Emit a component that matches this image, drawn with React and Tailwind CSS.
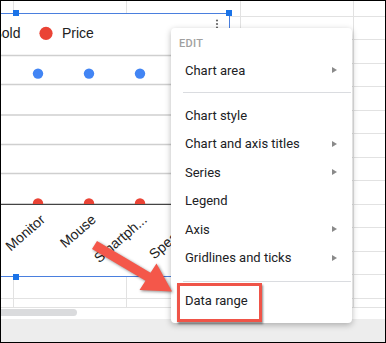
const MENU = [
  { label: "Chart area", sub: true },
  { sep: true, cls: "mt-[7.5px] mb-[8px]" },
  { label: "Chart style" },
  { label: "Chart and axis titles", sub: true },
  { label: "Series", sub: true },
  { label: "Legend" },
  { label: "Axis", sub: true },
  { label: "Gridlines and ticks", sub: true },
  { sep: true, cls: "mt-[8.5px] mb-[5px]" },
  { label: "Data range" },
];

const CATEGORIES = ["Monitor", "Mouse", "Smartph...", "Speakers"];

function SheetRow({ h }) {
  return (
    <div className={`flex shrink-0 border-b border-[#e2e2e2] ${h}`}>
      <div className="w-[13.5px] shrink-0 border-r border-[#e2e2e2]" />
      <div className="w-[113.5px] shrink-0 border-r border-[#e2e2e2]" />
      <div className="w-[113.5px] shrink-0 border-r border-[#e2e2e2]" />
      <div className="w-[113.5px] shrink-0 border-r border-[#e2e2e2]" />
      <div className="flex-1" />
    </div>
  );
}

function Sheet() {
  return (
    <div className="flex flex-col h-full bg-white">
      <SheetRow h="h-[16.5px]" />
      {Array.from({ length: 12 }).map((_, i) => (
        <SheetRow key={i} h="h-[23.5px]" />
      ))}
      <SheetRow h="h-[9px]" />
      {/* horizontal scrollbar */}
      <div className="h-[11px] shrink-0 pt-px">
        <div className="w-[77px] h-[7px] rounded-r-full bg-[#dadbdd]" />
      </div>
      <div className="flex-1 bg-[#ededed]" />
    </div>
  );
}

function Chart() {
  const xs = [38, 89, 140, 191];
  return (
    <div className="absolute left-[-40px] top-[13px] w-[270px] h-[264px] bg-white border-t border-r border-b border-[#4a7fde]">
      <svg
        className="absolute inset-0 font-['Liberation_Sans',Arial,sans-serif]"
        width="269"
        height="262"
        viewBox="-40 14 269 262"
      >
        <defs>
          <clipPath id="plot">
            <rect x="-40" y="14" width="269" height="190" />
          </clipPath>
        </defs>
        {/* legend */}
        <text x="-7.5" y="37.5" fontSize="14" fill="#222">Sold</text>
        <circle cx="46" cy="33.3" r="6.6" fill="#ea4335" />
        <text x="62" y="37.5" fontSize="14" fill="#222">Price</text>

        {/* gridlines */}
        {[55.5, 84.5, 115, 144.5, 173.5].map((y) => (
          <line key={y} x1="-40" x2="229" y1={y} y2={y} stroke="#cfcfcf" strokeWidth="1.3" />
        ))}
        <line x1="-40" x2="229" y1="204.3" y2="204.3" stroke="#444" strokeWidth="1.2" />

        {/* series */}
        {xs.map((x) => (
          <circle key={"b" + x} cx={x} cy="73.6" r="5.2" fill="#4285f4" />
        ))}
        <g clipPath="url(#plot)">
          {xs.map((x) => (
            <circle key={"r" + x} cx={x} cy="203.5" r="5.2" fill="#ea4335" />
          ))}
        </g>

        {/* x axis labels */}
        {CATEGORIES.map((c, i) => (
          <text
            key={c}
            x={xs[i] + 8}
            y="221"
            fontSize="14"
            fill="#222"
            textAnchor="end"
            transform={`rotate(-41 ${xs[i] + 8} 221)`}
          >
            {c}
          </text>
        ))}

        {/* kebab */}
        {[20.5, 24, 27.5].map((y) => (
          <circle key={y} cx="217" cy={y} r="1.1" fill="#666" />
        ))}
      </svg>
    </div>
  );
}

function Handle({ pos }) {
  return <div className={`absolute w-[6px] h-[6px] bg-[#1a73e8] ${pos}`} />;
}

function Triangle() {
  return (
    <svg width="5" height="6" viewBox="0 0 5 6">
      <polygon points="0,0 5,3 0,6" fill="#8a8a8a" />
    </svg>
  );
}

function ChartMenu() {
  return (
    <div className="absolute left-[171px] top-[28px] w-[181px] h-[295px] bg-white rounded-[4px] shadow-[0_2px_6px_rgba(0,0,0,0.28)] flex flex-col pt-[4px] font-['Roboto',sans-serif]">
      <div className="h-[24px] flex items-center pl-[8px] text-[11px] font-medium tracking-[0.3px] text-[#a0a0a0]">
        EDIT
      </div>
      {MENU.map((m, i) =>
        m.sep ? (
          <div key={i} className={`h-px ml-[12px] mr-px bg-[#dadce0] ${m.cls}`} />
        ) : (
          <div
            key={i}
            className="h-[28.5px] shrink-0 flex items-center justify-between pl-[14px] pr-[15px] text-[13px] text-[#202124]"
          >
            <span>{m.label}</span>
            {m.sub && <Triangle />}
          </div>
        )
      )}
    </div>
  );
}

function Callout() {
  return (
    <>
      <svg
        className="absolute left-0 top-0 drop-shadow-[1px_1px_1.5px_rgba(0,0,0,0.45)]"
        width="386"
        height="343"
        viewBox="0 0 386 343"
      >
        <polygon
          points="97,241 150.5,272.75 156.5,263.5 172,291.5 139.5,290 145.5,280.75 92,249"
          fill="#f4574a"
        />
      </svg>
      <div className="absolute left-[176.5px] top-[282.5px] w-[85.5px] h-[39.5px] border-[3.5px] border-[#ef5448] shadow-[1px_1.5px_2px_rgba(0,0,0,0.45)]" />
    </>
  );
}

export default function App() {
  return (
    <div className="relative w-[386px] h-[343px] overflow-hidden bg-white">
      <Sheet />
      <Chart />
      <Handle pos="left-[13px] top-[10px]" />
      <Handle pos="left-[226px] top-[10px]" />
      <Handle pos="left-[13px] top-[274px]" />
      <ChartMenu />
      <Callout />
      <div className="absolute inset-0 border border-black pointer-events-none" />
    </div>
  );
}
